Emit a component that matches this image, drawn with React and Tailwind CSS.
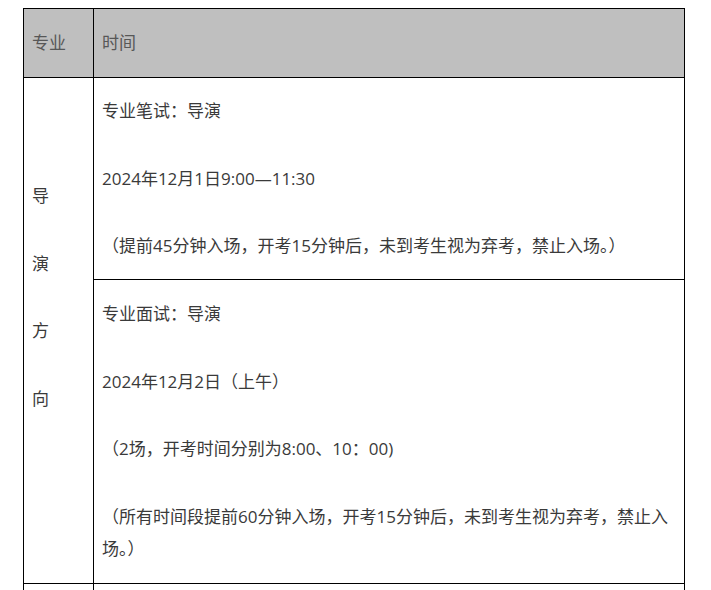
import React from "react";

const ROW1 = ["专业笔试：导演", "2024年12月1日9:00—11:30", "（提前45分钟入场，开考15分钟后，未到考生视为弃考，禁止入场。）"];

const ROW2 = [
  "专业面试：导演",
  "2024年12月2日（上午）",
  "（2场，开考时间分别为8:00、10：00)",
];

const FONT = "font-['Open_Sans','Noto_Sans_CJK_SC',sans-serif]";

function Para({ children }) {
  return <p className="leading-[32px] whitespace-nowrap">{children}</p>;
}

export default function App() {
  return (
    <div className={`min-h-[590px] bg-white pt-[8px] text-[17px] text-[#3a3a3a] ${FONT}`}>
      <div className="ml-[23px] w-[662px] border-x border-t border-black">
        {/* header */}
        <div className="flex h-[69px] border-b border-black bg-[#bfbfbf] text-[#575757]">
          <div className="flex w-[70px] items-center border-r border-black pl-[8px]">专业</div>
          <div className="flex flex-1 items-center pl-[8px]">时间</div>
        </div>

        {/* 导演方向 */}
        <div className="flex border-b border-black">
          <div className="flex w-[70px] flex-col gap-[35.5px] border-r border-black pl-[8px] pt-[102px]">
            {["导", "演", "方", "向"].map((c) => (
              <Para key={c}>{c}</Para>
            ))}
          </div>
          <div className="flex flex-1 flex-col">
            <div className="flex h-[202px] flex-col gap-[35.5px] border-b border-black pl-[8px] pt-[17px]">
              {ROW1.map((t) => (
                <Para key={t}>{t}</Para>
              ))}
            </div>
            <div className="flex h-[303px] flex-col gap-[35.5px] pl-[8px] pt-[18px]">
              {ROW2.map((t) => (
                <Para key={t}>{t}</Para>
              ))}
              <p className="leading-[32px] whitespace-nowrap">
                （所有时间段提前60分钟入场，开考15分钟后，未到考生视为弃考，禁止入
                <br />
                场。）
              </p>
            </div>
          </div>
        </div>

        {/* next row (cut off) */}
        <div className="flex h-[40px]">
          <div className="w-[70px] border-r border-black" />
          <div className="flex-1" />
        </div>
      </div>
    </div>
  );
}
